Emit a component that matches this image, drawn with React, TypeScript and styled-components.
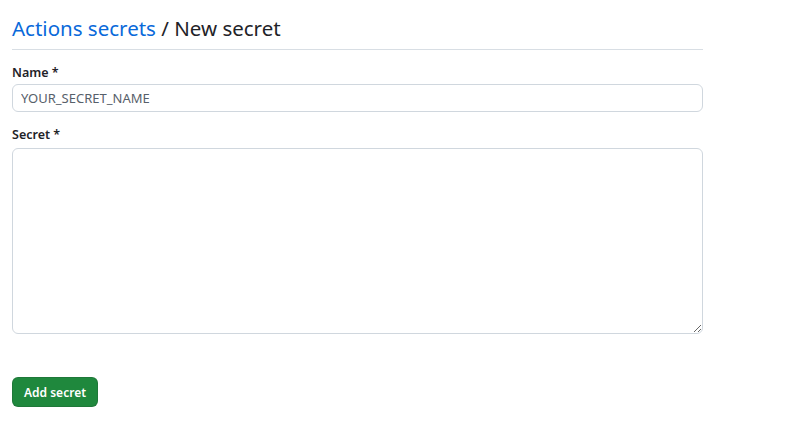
import React from 'react';
import styled, { createGlobalStyle } from 'styled-components';

const GlobalStyle = createGlobalStyle`
  body {
    margin: 0;
    background: #ffffff;
    font-family: "Noto Sans", "Liberation Sans", sans-serif;
    color: #1f2328;
  }
`;

const Page = styled.div`
  padding: 8px 12px 0 12px;
  width: 691px;
`;

const Header = styled.div`
  display: flex;
  align-items: center;
  height: 41px;
  border-bottom: 1px solid #d8dee4;
  margin-bottom: 13px;
`;

const Title = styled.h2`
  margin: 0;
  font-size: 20.5px;
  font-weight: 400;
  line-height: 1.5;
  color: #1f2328;
`;

const Crumb = styled.a`
  color: #0969da;
  text-decoration: none;
`;

const Field = styled.div`
  display: flex;
  flex-direction: column;
  margin-bottom: 13px;
`;

const Label = styled.label`
  font-size: 12.5px;
  font-weight: 600;
  line-height: 20px;
  margin-bottom: 1px;
`;

const TextInput = styled.input`
  box-sizing: border-box;
  height: 28px;
  padding: 3px 8px;
  font-family: inherit;
  font-size: 13px;
  color: #1f2328;
  border: 1px solid #d0d7de;
  border-radius: 6px;
  outline: none;

  &::placeholder {
    color: #57606a;
  }
`;

const TextArea = styled.textarea`
  box-sizing: border-box;
  height: 186px;
  padding: 8px;
  margin-top: 2px;
  font-family: inherit;
  font-size: 13px;
  border: 1px solid #d0d7de;
  border-radius: 6px;
  outline: none;
  resize: vertical;
`;

const Actions = styled.div`
  padding-top: 30px;
`;

const PrimaryButton = styled.button`
  height: 30px;
  padding: 0 11px;
  font-family: inherit;
  font-size: 12px;
  font-weight: 600;
  color: #ffffff;
  background-color: #1f883d;
  border: 1px solid rgba(31, 35, 40, 0.15);
  border-radius: 6px;
  cursor: pointer;
`;

export default function App() {
  return (
    <>
      <GlobalStyle />
      <Page>
        <Header>
          <Title>
            <Crumb href="#">Actions secrets</Crumb> / New secret
          </Title>
        </Header>
        <Field>
          <Label>Name *</Label>
          <TextInput placeholder="YOUR_SECRET_NAME" />
        </Field>
        <Field>
          <Label>Secret *</Label>
          <TextArea />
        </Field>
        <Actions>
          <PrimaryButton>Add secret</PrimaryButton>
        </Actions>
      </Page>
    </>
  );
}
